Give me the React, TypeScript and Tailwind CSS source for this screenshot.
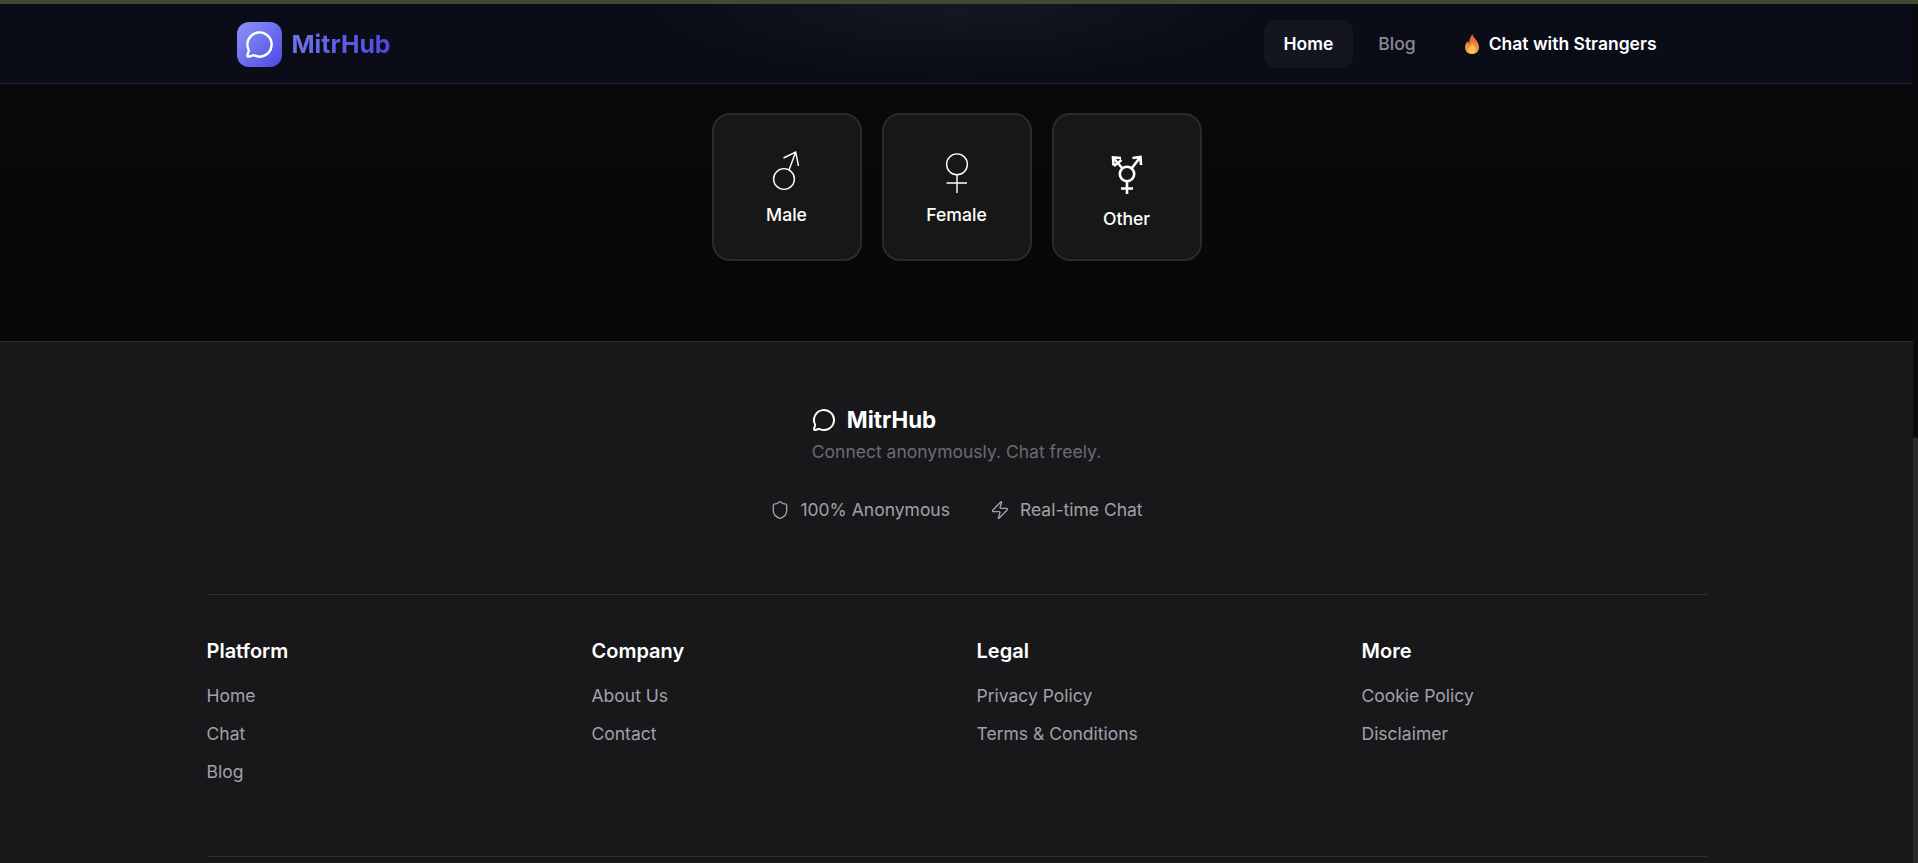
import { MessageCircle, Shield, Zap } from "lucide-react";

function MaleIcon() {
  return (
    <svg width="48" height="48" viewBox="0 0 48 48" fill="none" stroke="white" strokeWidth="1.4">
      <circle cx="21" cy="32" r="10.4" />
      <path d="M26 23L32.7 5M20.5 11L32.7 5L35.5 19" />
    </svg>
  );
}
function FemaleIcon() {
  return (
    <svg width="48" height="48" viewBox="0 0 48 48" fill="none" stroke="white" strokeWidth="1.4">
      <circle cx="24" cy="17.3" r="10.4" />
      <path d="M24 27.7V46M13.5 36H34" />
    </svg>
  );
}
function OtherIcon() {
  return (
    <svg width="48" height="56" viewBox="0 0 48 56" fill="none" stroke="white" strokeWidth="2.6">
      <circle cx="24" cy="31" r="7.2" />
      <path d="M24 38V51M18 45.5H30" />
      <path d="M28.5 25.5L37 14.5M29.5 15L37.5 14L38 22" />
      <path d="M19.5 25.5L10.5 15M18 15L10 14.5L10.5 22.5M11 23L18.5 17" />
    </svg>
  );
}
function Flame() {
  return (
    <svg width="14" height="20" viewBox="0 0 14 20">
      <defs>
        <linearGradient id="fl" x1="0" y1="0" x2="0" y2="1">
          <stop offset="0" stopColor="#d9542b" />
          <stop offset="0.55" stopColor="#ee8a35" />
          <stop offset="1" stopColor="#f9b04a" />
        </linearGradient>
      </defs>
      <path d="M7.5 0C8 3 10 4 11.8 7C13.4 9.7 14 11.5 14 13.2C14 17.2 11 20 7 20C3 20 0 17.2 0 13.2C0 10.5 1.4 8.8 2.6 7C3 8.2 3.4 8.8 4.2 9C4 5.5 5.6 2.5 7.5 0Z" fill="url(#fl)" />
      <path d="M7.2 10C8 12 10.6 13 10.6 15.6C10.6 18 9 19.6 7 19.6C5 19.6 3.4 18 3.4 15.6C3.4 13.2 6 12.4 7.2 10Z" fill="#fbc25e" />
    </svg>
  );
}

function GenderCard({ icon, label }: { icon: React.ReactNode; label: string }) {
  return (
    <div className="flex h-[148px] w-[150px] flex-col items-center justify-center gap-2 rounded-[18px] border-2 border-[#2a2a2a] bg-[#171717]">
      {icon}
      <span className="text-[17.6px] leading-6 font-medium text-white">{label}</span>
    </div>
  );
}

const columns = [
  { title: "Platform", links: ["Home", "Chat", "Blog"] },
  { title: "Company", links: ["About Us", "Contact"] },
  { title: "Legal", links: ["Privacy Policy", "Terms & Conditions"] },
  { title: "More", links: ["Cookie Policy", "Disclaimer"] },
];

export default function App() {
  return (
    <div className="flex h-[863px] flex-col overflow-hidden bg-[#08080a] font-['Inter',sans-serif]">
      <div className="h-1 shrink-0 bg-[#3f4a33]" />
      <div className="flex min-h-0 flex-1">
        <div className="flex min-w-0 flex-1 flex-col">
          <nav className="h-[80px] shrink-0 border-b border-[#23242c] bg-[#0a0c18] bg-[radial-gradient(ellipse_300px_70px_at_50%_0%,#151820,transparent)]">
            <div className="mx-auto flex h-full w-[1500px] items-center justify-between px-[30px] pt-[1px]">
              <div className="flex items-center gap-[10px]">
                <div className="flex h-[45px] w-[45px] items-center justify-center rounded-xl bg-gradient-to-br from-[#8f93f7] to-[#4f46e5]">
                  <MessageCircle size={29} color="white" strokeWidth={2} />
                </div>
                <span className="mt-[1px] bg-gradient-to-r from-[#6f72ea] to-[#4f46e5] bg-clip-text text-[24.8px] font-bold text-transparent">
                  MitrHub
                </span>
              </div>
              <div className="flex items-center gap-[5px]">
                <a className="flex h-[48px] items-center rounded-xl bg-[#14161f] px-5 text-[17.5px] font-semibold text-white">Home</a>
                <a className="flex h-[48px] items-center px-5 text-[17.5px] font-medium text-[#8b8b93]">Blog</a>
                <a className="ml-[4px] flex h-[48px] items-center gap-[10px] px-5 text-[17.5px] font-semibold text-white">
                  <Flame />
                  Chat with Strangers
                </a>
              </div>
            </div>
          </nav>
          <main className="flex h-[257px] shrink-0 justify-center gap-5 bg-gradient-to-b from-[#09090b] to-[#07070a] pt-[29px]">
            <GenderCard icon={<MaleIcon />} label="Male" />
            <GenderCard icon={<FemaleIcon />} label="Female" />
            <GenderCard icon={<OtherIcon />} label="Other" />
          </main>
          <footer className="flex-1 border-t border-[#2c2c2e] bg-[#18181a]">
            <div className="mx-auto w-[1500px]">
              <div className="flex flex-col items-center pt-[62px]">
                <div className="flex flex-col">
                  <div className="flex items-center gap-[11px]">
                    <MessageCircle size={24} color="white" strokeWidth={2} />
                    <span className="text-[22.4px] leading-8 font-bold text-white">MitrHub</span>
                  </div>
                  <p className="mt-[4px] text-[17.5px] leading-6 text-[#6b6b73]">Connect anonymously. Chat freely.</p>
                </div>
                <div className="mt-[34px] flex items-center gap-10 text-[17.5px] leading-6 text-[#a1a1aa]">
                  <span className="flex items-center gap-[10px]">
                    <Shield size={20} strokeWidth={1.6} />
                    100% Anonymous
                  </span>
                  <span className="flex items-center gap-[10px]">
                    <Zap size={20} strokeWidth={1.6} />
                    Real-time Chat
                  </span>
                </div>
              </div>
              <div className="mt-[72px] grid grid-cols-4 gap-10 border-t border-[#303033] pt-[42px]">
                {columns.map((c) => (
                  <div key={c.title}>
                    <h3 className="text-[20px] leading-7 font-semibold text-white">{c.title}</h3>
                    <ul className="mt-[19px] flex flex-col gap-[14px]">
                      {c.links.map((l) => (
                        <li key={l} className="text-[17.5px] leading-6 text-[#a1a1aa]">{l}</li>
                      ))}
                    </ul>
                  </div>
                ))}
              </div>
              <div className="mt-[72px] border-t border-[#303033]" />
            </div>
          </footer>
        </div>
        <div className="flex w-[5px] shrink-0 flex-col bg-[#0a0a0c] pt-[433px]">
          <div className="flex-1 rounded-t-sm bg-[#2b2b2b]" />
        </div>
      </div>
    </div>
  );
}
